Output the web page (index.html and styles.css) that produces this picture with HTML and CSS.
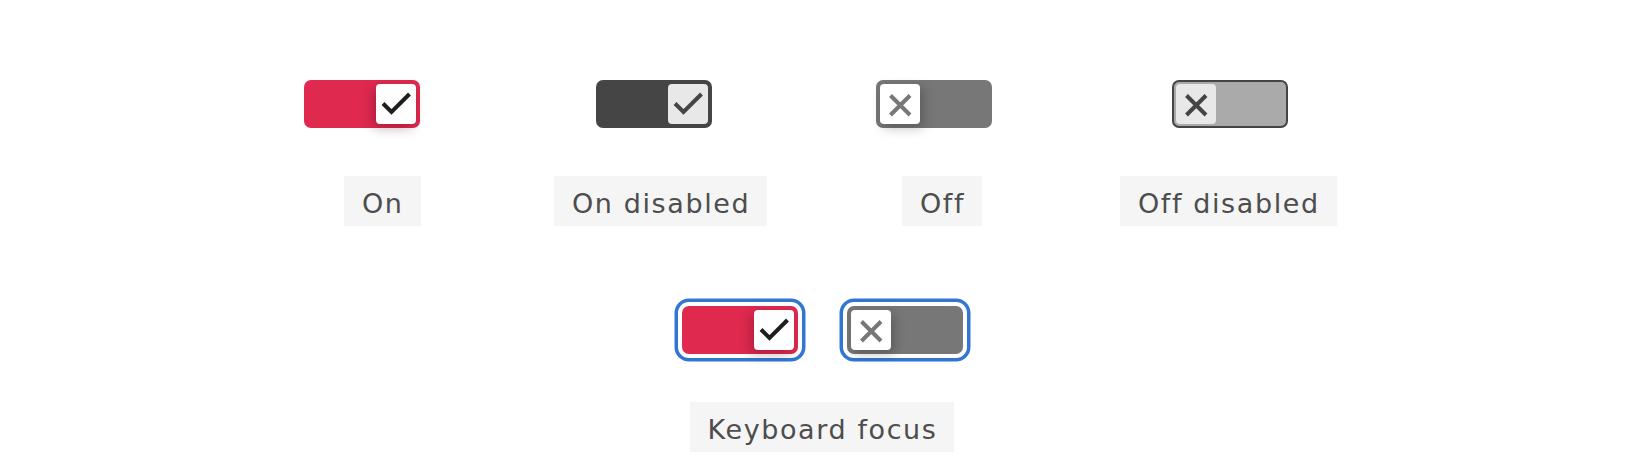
FILE: index.html
```
<!DOCTYPE html>
<html lang="en">
<head>
<meta charset="utf-8">
<title>Toggle states</title>
<link rel="stylesheet" href="styles.css">
</head>
<body>
<main class="demo">
  <section class="states">
    <div class="state state--on">
      <span class="toggle toggle--on">
        <span class="thumb"><svg viewBox="0 0 40 40"><path class="mark" d="M7 19.5 L15.5 28 L33.5 10"/></svg></span>
      </span>
      <span class="caption">On</span>
    </div>
    <div class="state state--on-disabled">
      <span class="toggle toggle--on-disabled">
        <span class="thumb"><svg viewBox="0 0 40 40"><path class="mark" d="M7 19.5 L15.5 28 L33.5 10"/></svg></span>
      </span>
      <span class="caption">On disabled</span>
    </div>
    <div class="state state--off">
      <span class="toggle toggle--off">
        <span class="thumb"><svg viewBox="0 0 40 40"><path class="mark" d="M10.5 11.5 L30 31 M30 11.5 L10.5 31"/></svg></span>
      </span>
      <span class="caption">Off</span>
    </div>
    <div class="state state--off-disabled">
      <span class="toggle toggle--off-disabled">
        <span class="thumb"><svg viewBox="0 0 40 40"><path class="mark" d="M10.5 11.5 L30 31 M30 11.5 L10.5 31"/></svg></span>
      </span>
      <span class="caption">Off disabled</span>
    </div>
  </section>
  <section class="focus">
    <div class="focus-toggles">
      <span class="toggle toggle--on toggle--focus">
        <span class="thumb"><svg viewBox="0 0 40 40"><path class="mark" d="M7 19.5 L15.5 28 L33.5 10"/></svg></span>
      </span>
      <span class="toggle toggle--off toggle--focus">
        <span class="thumb"><svg viewBox="0 0 40 40"><path class="mark" d="M10.5 11.5 L30 31 M30 11.5 L10.5 31"/></svg></span>
      </span>
    </div>
    <span class="caption">Keyboard focus</span>
  </section>
</main>
</body>
</html>
```
FILE: styles.css
```
html, body {
  margin: 0;
  background: #ffffff;
}

body {
  padding: 80px 0 0 2px;
  font-family: "DejaVu Sans", "Liberation Sans", sans-serif;
}

.demo {
  display: flex;
  flex-direction: column;
  gap: 80px;
}

.states {
  display: grid;
  grid-template-columns: 250px 322px 244px 220px;
  justify-content: center;
}

.state {
  display: flex;
  flex-direction: column;
  align-items: flex-start;
  gap: 48px;
}

.state--on .caption { margin-left: 40px; }
.state--on-disabled .toggle { margin-left: 42px; }
.state--off .caption { margin-left: 26px; }
.state--off-disabled .toggle { margin-left: 52px; }

.focus {
  display: flex;
  flex-direction: column;
  align-items: center;
  gap: 48px;
}

.focus-toggles {
  display: flex;
  gap: 49px;
}

.caption {
  display: inline-block;
  padding: 15px 17px 9px 18px;
  font-size: 27px;
  line-height: 26px;
  letter-spacing: 1.6px;
  color: #4d4d4d;
  background: #f5f5f5;
  white-space: nowrap;
}

.toggle {
  box-sizing: border-box;
  display: flex;
  width: 116px;
  height: 48px;
  padding: 4px;
  border-radius: 7px;
}

.thumb {
  display: flex;
  width: 40px;
  height: 40px;
  border-radius: 4px;
  background: #ffffff;
}

.thumb svg {
  width: 40px;
  height: 40px;
}

.mark {
  fill: none;
  stroke-width: 4;
  stroke-linecap: butt;
  stroke-linejoin: miter;
}

.toggle--on {
  justify-content: flex-end;
  background: #e0294f;
}
.toggle--on .thumb {
  box-shadow: -3px 4px 12px rgba(60, 0, 20, 0.3);
}
.toggle--on .mark { stroke: #1e1e1e; }

.toggle--on-disabled {
  justify-content: flex-end;
  background: #454545;
}
.toggle--on-disabled .thumb { background: #e8e8e8; }
.toggle--on-disabled .mark { stroke: #454545; }

.toggle--off {
  justify-content: flex-start;
  background: #777777;
}
.toggle--off .thumb {
  box-shadow: 3px 4px 12px rgba(0, 0, 0, 0.25);
}
.toggle--off .mark { stroke: #777777; }

.toggle--off-disabled {
  justify-content: flex-start;
  padding: 2px;
  background: #aaaaaa;
  border: 2px solid #444444;
}
.toggle--off-disabled .thumb { background: #e8e8e8; }
.toggle--off-disabled .mark { stroke: #444444; }

.toggle--focus {
  box-shadow: 0 0 0 4px #ffffff, 0 0 0 7.5px #3176d2;
}
```
